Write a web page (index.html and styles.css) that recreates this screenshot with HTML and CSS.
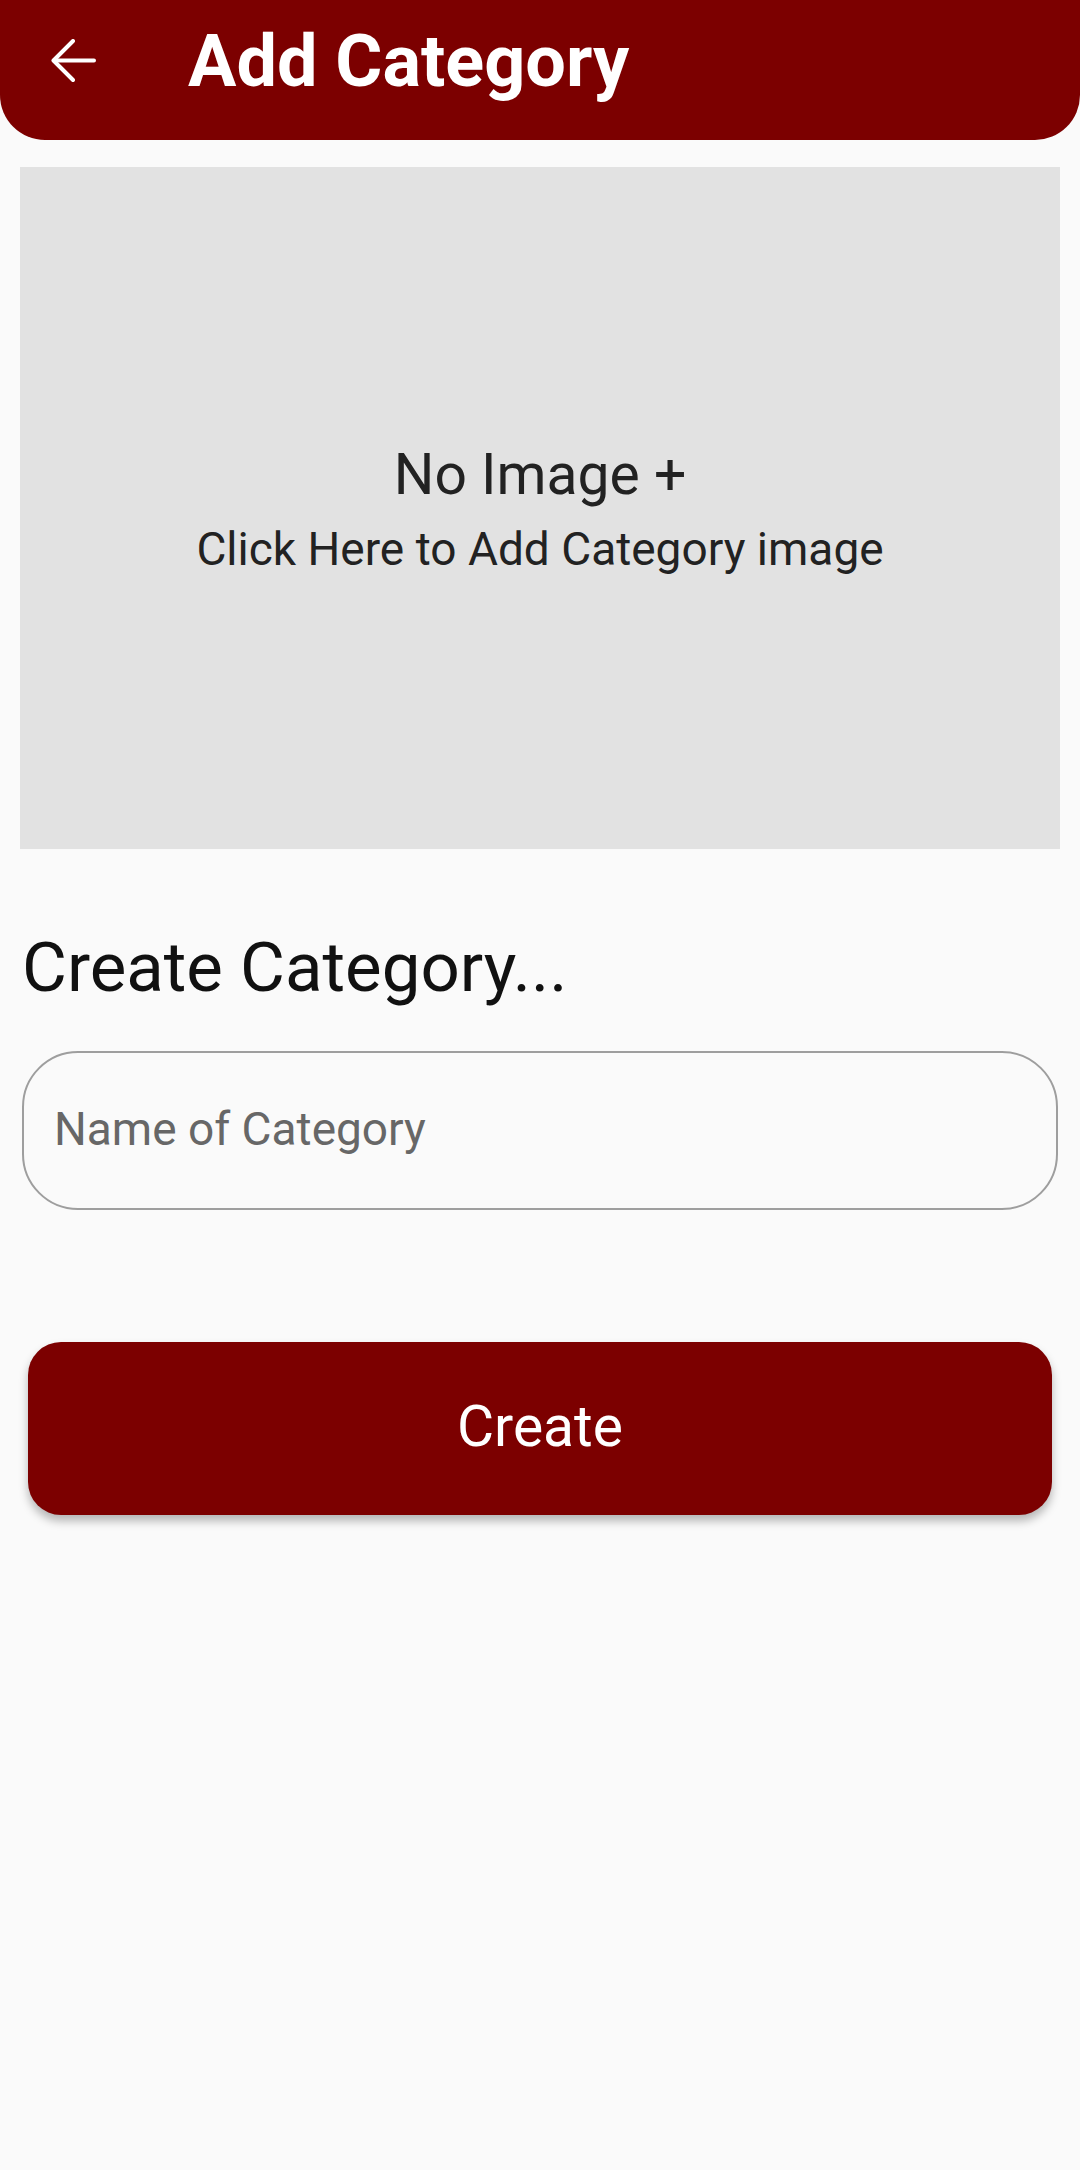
FILE: index.html
```html
<!DOCTYPE html>
<html lang="en">
<head>
<meta charset="utf-8">
<title>Add Category</title>
<link rel="stylesheet" href="styles.css">
</head>
<body>
<div class="screen">
  <header class="appbar">
    <button class="back" aria-label="Back">
      <svg width="45" height="44" viewBox="0 0 45 44" fill="none" stroke="#fff" stroke-width="4" stroke-linecap="round" stroke-linejoin="round">
        <path d="M43 21.5H3"/>
        <path d="M22 2L2.5 21.5L22 41"/>
      </svg>
    </button>
    <h1 class="title">Add Category</h1>
  </header>

  <div class="image-box">
    <div class="no-image">No Image +</div>
    <div class="hint">Click Here to Add Category image</div>
  </div>

  <h2 class="section-title">Create Category...</h2>

  <input class="name-input" type="text" placeholder="Name of Category">

  <button class="create-btn">Create</button>
</div>
</body>
</html>
```

FILE: styles.css
```css
* { box-sizing: border-box; }

html, body {
  margin: 0;
  padding: 0;
  background: #fafafa;
}

body {
  font-family: Roboto, "Noto Sans", "Liberation Sans", sans-serif;
  width: 1080px;
  height: 2170px;
}

.screen {
  display: flex;
  flex-direction: column;
}

.appbar {
  height: 140px;
  background: #7c0000;
  border-radius: 0 0 45px 45px;
  display: flex;
  align-items: center;
  padding: 0 0 18px 51px;
}

.back {
  background: none;
  border: 0;
  padding: 0;
  width: 45px;
  height: 44px;
  display: flex;
  align-items: center;
  justify-content: center;
}

.back svg { display: block; }

.title {
  margin: 0 0 0 92px;
  font-size: 72px;
  font-weight: 700;
  color: #fff;
  line-height: normal;
  letter-spacing: 0;
}

.image-box {
  margin: 27px 20px 0 20px;
  height: 682px;
  background: #e2e2e2;
  display: flex;
  flex-direction: column;
  align-items: center;
  justify-content: center;
  padding-bottom: 0;
  color: #222;
}

.no-image {
  font-size: 57px;
  line-height: normal;
}

.hint {
  font-size: 46px;
  line-height: normal;
  margin-top: 14px;
}

.section-title {
  margin: 78px 0 0 0;
  padding-left: 22px;
  font-size: 69px;
  font-weight: 400;
  color: #111;
  line-height: normal;
}

.name-input {
  margin: 43px 22px 0 22px;
  height: 159px;
  border: 2px solid #9e9e9e;
  border-radius: 56px;
  background: transparent;
  padding: 0 0 4px 30px;
  font-family: Roboto, "Noto Sans", "Liberation Sans", sans-serif;
  font-size: 46px;
  color: #333;
  outline: none;
}

.name-input::placeholder {
  color: #676767;
}

.create-btn {
  margin: 132px 28px 0 28px;
  height: 173px;
  border: 0;
  border-radius: 33px;
  background: #7c0000;
  color: #fff;
  font-family: Roboto, "Noto Sans", "Liberation Sans", sans-serif;
  font-size: 57px;
  font-weight: 400;
  box-shadow: 0 6px 10px rgba(0, 0, 0, 0.28);
  padding-bottom: 6px;
}
```
